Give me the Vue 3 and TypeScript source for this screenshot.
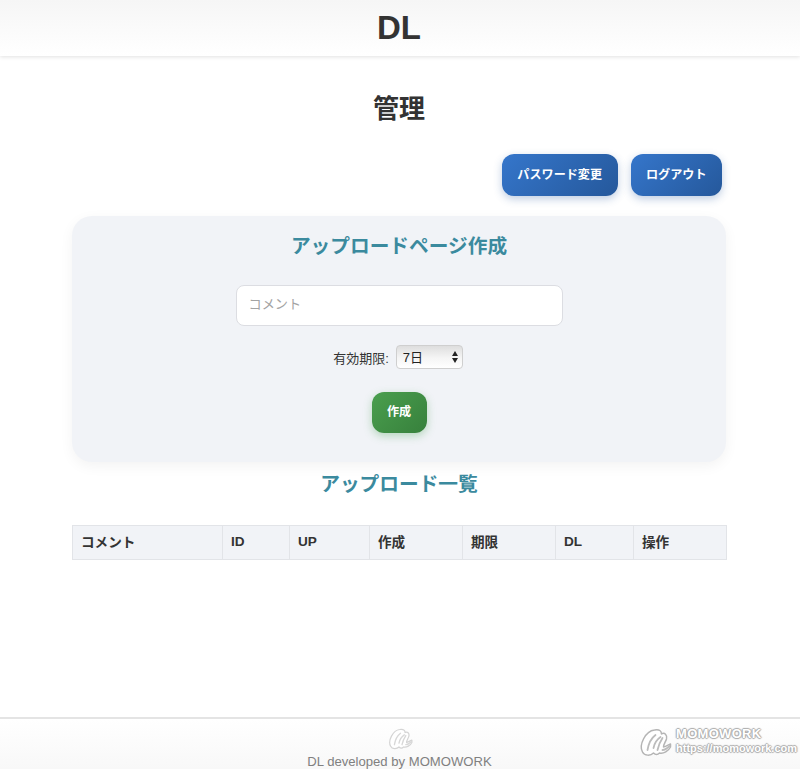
<script setup lang="ts">
const columns: { label: string; width: number }[] = [
  { label: 'コメント', width: 150 },
  { label: 'ID', width: 67 },
  { label: 'UP', width: 80 },
  { label: '作成', width: 93 },
  { label: '期限', width: 93 },
  { label: 'DL', width: 78 },
  { label: '操作', width: 93 },
]
const logoOuter = 'M3 23 C-1 16 6 2 15 1 C20 0 22 2 22 5 C25 3 28 6 27 10 C26 13 24 15 24 18 C26 18 28 16 31 15 L31 18 C29 22 24 25 20 24 C18 26 16 26 14 24 C11 27 5 27 3 23 Z'
const logoInner = ['M8 21 C9 15 12 9 16 6', 'M14 19 C15 14 18 10 21 8', 'M18 21 C19 16 21 12 23 9', 'M23 21 C25 21 27 20 30 17']
</script>

<template>
  <div class="page">
    <header class="top">
      <h1 class="brand">DL</h1>
    </header>

    <main class="content">
      <h2 class="title">管理</h2>
      <div class="actions">
        <button class="btn blue" type="button">パスワード変更</button>
        <button class="btn blue" type="button">ログアウト</button>
      </div>

      <section class="card">
        <h3 class="heading">アップロードページ作成</h3>
        <input class="comment" type="text" placeholder="コメント" />
        <div class="expiry">
          <label for="expiry">有効期限:</label>
          <span class="select-wrap">
            <select id="expiry" class="select">
              <option>7日</option>
            </select>
            <span class="arrows"><i class="up"></i><i class="down"></i></span>
          </span>
        </div>
        <button class="btn green" type="button">作成</button>
      </section>

      <h3 class="heading list-heading">アップロード一覧</h3>

      <table class="table">
        <colgroup>
          <col v-for="c in columns" :key="c.label" :style="{ width: c.width + 'px' }" />
        </colgroup>
        <thead>
          <tr>
            <th v-for="c in columns" :key="c.label">{{ c.label }}</th>
          </tr>
        </thead>
      </table>
    </main>

    <footer class="foot">
      <svg class="foot-logo" viewBox="-1 -1 34 29" width="27" height="22" aria-hidden="true">
        <path :d="logoOuter" class="logo-back" />
        <path v-for="d in logoInner" :key="d" :d="d" class="logo-inner" />
      </svg>
      <p class="foot-text">DL developed by MOMOWORK</p>

      <div class="mark">
        <svg viewBox="-1 -1 34 29" width="35" height="29" aria-hidden="true">
          <path :d="logoOuter" class="logo-back strong" />
          <path v-for="d in logoInner" :key="d" :d="d" class="logo-inner strong" />
        </svg>
        <div class="mark-text">
          <span class="mark-name">MOMOWORK</span>
          <span class="mark-url">https://momowork.com</span>
        </div>
      </div>
    </footer>
  </div>
</template>

<style>
html, body { margin: 0; background: #fff; }
</style>

<style scoped>
.page {
  min-height: 769px;
  display: flex;
  flex-direction: column;
  font-family: "Liberation Sans", "Noto Sans CJK JP", sans-serif;
  color: #333;
  overflow: hidden;
}
.top {
  height: 56px;
  display: flex;
  align-items: center;
  justify-content: center;
  background: linear-gradient(#f6f6f6, #fff);
  box-shadow: 0 1px 4px rgba(0, 0, 0, 0.12);
}
.brand { margin: 0; padding-right: 2px; font-size: 33px; line-height: 56px; font-weight: 700; }
.content {
  flex: 1;
  box-sizing: border-box;
  padding: 0 74px 0 72px;
  display: flex;
  flex-direction: column;
}
.title {
  margin: 36px 0 0;
  text-align: center;
  font-size: 26px;
  line-height: 34px;
  font-weight: 700;
}
.actions {
  margin-top: 28px;
  display: flex;
  justify-content: flex-end;
  gap: 13px;
  padding-right: 4px;
}
.btn {
  border: 0;
  border-radius: 12px;
  color: #fff;
  font: 700 12.1px/1 "Liberation Sans", "Noto Sans CJK JP", sans-serif;
  height: 42px;
  padding: 0 15.5px;
}
.blue {
  background: linear-gradient(135deg, #3576cb, #25589b);
  box-shadow: 0 3px 8px rgba(40, 90, 160, 0.3);
}
.green {
  width: 55px;
  height: 41px;
  padding: 0;
  margin-top: 23px;
  background: linear-gradient(135deg, #4a9f4e, #37803c);
  box-shadow: 0 3px 8px rgba(70, 160, 80, 0.35);
}
.card {
  margin-top: 20px;
  height: 246px;
  box-sizing: border-box;
  padding-top: 18px;
  background: #f1f3f7;
  border-radius: 20px;
  box-shadow: 0 4px 14px rgba(0, 0, 0, 0.05);
  display: flex;
  flex-direction: column;
  align-items: center;
}
.heading {
  margin: 0;
  font-size: 19.7px;
  line-height: 24px;
  font-weight: 700;
  color: #3b8a9e;
  text-align: center;
}
.comment {
  box-sizing: border-box;
  width: 327px;
  height: 41px;
  margin-top: 27px;
  padding: 0 12px 2px;
  border: 1px solid #dcdde2;
  border-radius: 8px;
  background: #fff;
  font: 13.2px "Liberation Sans", "Noto Sans CJK JP", sans-serif;
}
.comment::placeholder { color: #a3a3a3; }
.expiry {
  margin-top: 19px;
  height: 24px;
  display: flex;
  align-items: center;
  gap: 7px;
  font-size: 13px;
  color: #333;
  margin-left: -2px;
}
.select-wrap { position: relative; display: block; height: 24px; }
.select {
  appearance: none;
  -webkit-appearance: none;
  display: block;
  box-sizing: border-box;
  width: 67px;
  height: 24px;
  font: 13px "Liberation Sans", "Noto Sans CJK JP", sans-serif;
  border: 1px solid #cfcfcf;
  border-radius: 4px;
  background: linear-gradient(#dedede, #f5f5f5 55%, #fff);
  padding: 0 0 0 6px;
  color: #222;
}
.arrows {
  position: absolute;
  right: 5px;
  top: 6px;
  display: flex;
  flex-direction: column;
  gap: 2px;
  pointer-events: none;
}
.arrows i { display: block; width: 0; height: 0; border-left: 3px solid transparent; border-right: 3px solid transparent; }
.arrows .up { border-bottom: 5px solid #222; }
.arrows .down { border-top: 5px solid #222; }
.list-heading { margin-top: 10px; }
.table {
  margin-top: 29px;
  width: 654px;
  table-layout: fixed;
  border-collapse: collapse;
}
.table th {
  height: 34px;
  padding: 0 8px 3px;
  box-sizing: border-box;
  text-align: left;
  background: #f1f3f7;
  border: 1px solid #e2e4e8;
  font-size: 13.6px;
  font-weight: 700;
  color: #333;
}
.foot {
  position: relative;
  height: 52px;
  box-sizing: border-box;
  border-top: 2px solid #e4e4e4;
  background: linear-gradient(#fff, #f8f8f8);
  display: flex;
  flex-direction: column;
  align-items: center;
  padding-top: 9px;
}
.foot-logo { display: block; }
.foot-text {
  margin: 0;
  font-size: 13.1px;
  line-height: 15px;
  color: #808080;
  position: absolute;
  bottom: 0;
  padding-right: 1px;
}
.logo-back { fill: #fff; stroke: #d4d4d4; stroke-width: 1.6; stroke-linejoin: round; }
.logo-back.strong { stroke: #b4b4b4; stroke-width: 1.5; }
.logo-inner { fill: none; stroke: #d8d8d8; stroke-width: 1.8; stroke-linecap: round; }
.logo-inner.strong { stroke: #bcbcbc; }
.mark {
  position: absolute;
  left: 638px;
  top: 9px;
  display: flex;
  align-items: center;
  gap: 3px;
}
.mark-text { display: flex; flex-direction: column; margin-top: -4px; }
.mark-name, .mark-url {
  color: #fff;
  font-weight: 700;
  text-shadow: 1px 0 1px #aaa, -1px 0 1px #aaa, 0 1px 1px #aaa, 0 -1px 1px #aaa;
}
.mark-name { font-size: 13px; line-height: 14px; letter-spacing: 0.3px; }
.mark-url { font-size: 11px; line-height: 14px; }
</style>
